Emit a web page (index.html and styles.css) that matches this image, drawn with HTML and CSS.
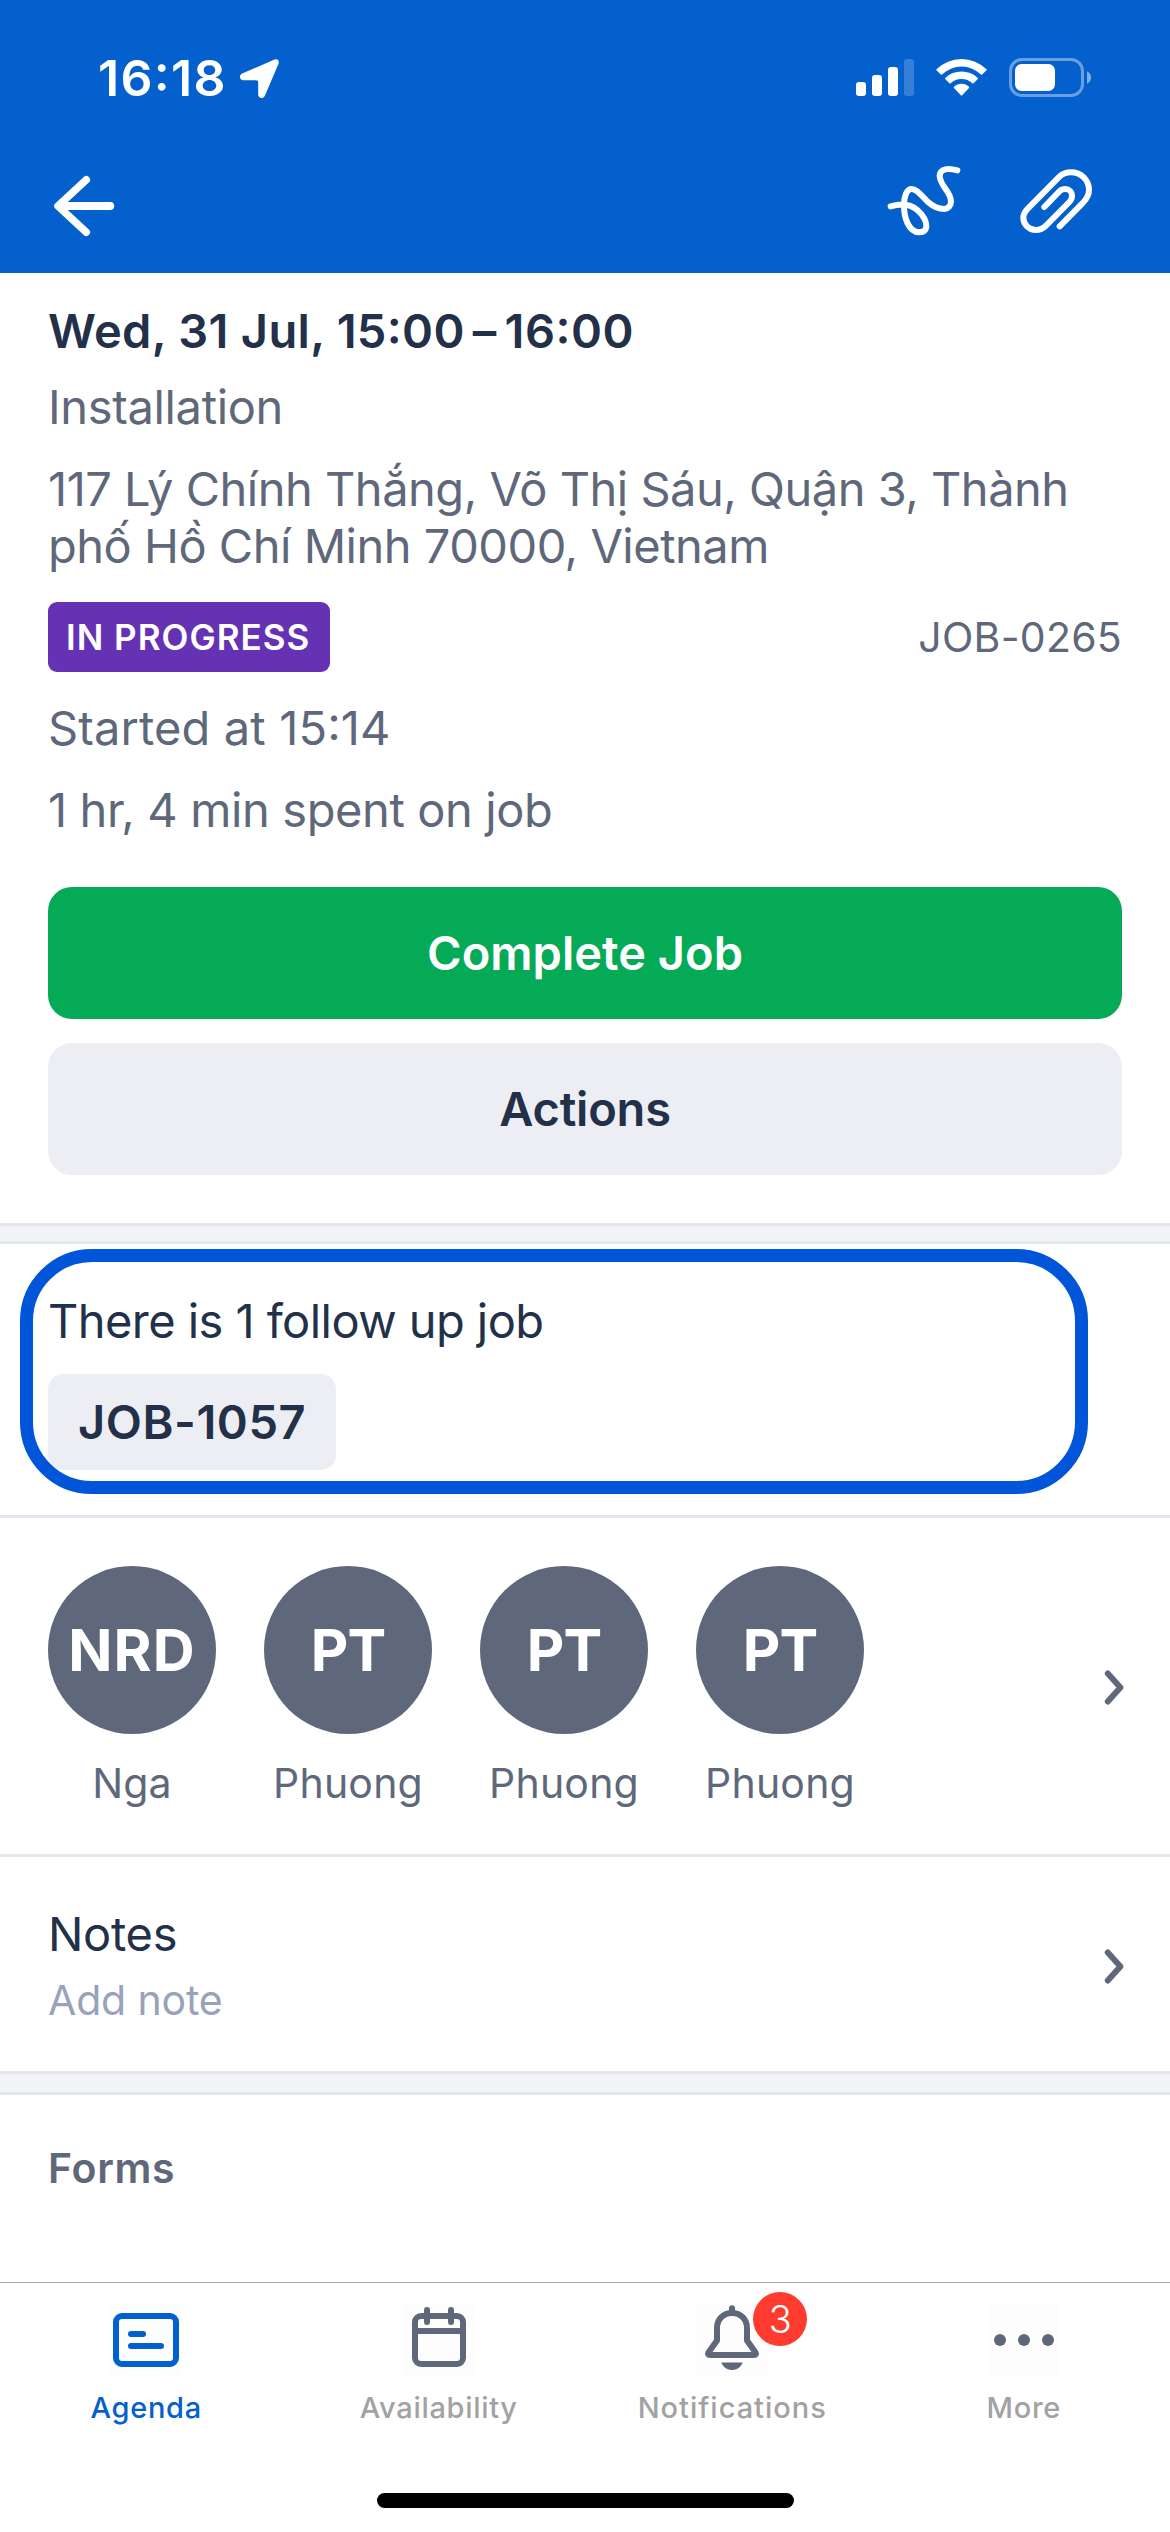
FILE: index.html
```html
<!DOCTYPE html>
<html lang="en">
<head>
<meta charset="utf-8">
<title>Job details</title>
<link rel="stylesheet" href="styles.css">
</head>
<body>
<div class="screen">
  <header class="header">
    <div class="status-bar">
      <span class="clock">16:18</span>
      <svg class="location" viewBox="0 0 39 39" width="39" height="39"><path d="M34.500 .4C37.600-.6 39.400 1.600 38.600 4.600L25 36.400C23.500 40.200 18.200 39.600 18.200 35.500V23.200Q18.200 21.200 16.200 21.200H3.600C-.6 21.200-1.300 16.200 2.200 14.600Z" fill="#fff"/></svg>
      <svg class="device" viewBox="0 0 235 40" width="235" height="40">
        <g fill="#fff">
          <rect x="0" y="24" width="10" height="14" rx="3"/>
          <rect x="16" y="17" width="10" height="21" rx="3"/>
          <rect x="32" y="9" width="10" height="29" rx="3"/>
          <rect x="48" y="1" width="10" height="37" rx="3" opacity=".2"/>
          <path d="M80.500 11.200A35.800 35.800 0 0 1 130.500 11.200Q131 11.700 130.500 12.200L126.200 16.500Q125.600 17 125 16.500A28 28 0 0 0 86 16.500Q85.400 17 84.800 16.500L80.500 12.200Q80 11.700 80.500 11.200Z"/>
          <path d="M89.200 20A23.400 23.400 0 0 1 121.800 20Q122.300 20.600 121.800 21.100L117.600 25.300Q117 25.800 116.400 25.300A15.700 15.700 0 0 0 94.600 25.300Q94 25.800 93.400 25.300L89.200 21.100Q88.700 20.600 89.200 20Z"/>
          <path d="M98 28.800A10.600 10.600 0 0 1 113 28.800Q113.500 29.400 113 30L106.200 37.200Q105.500 37.900 104.800 37.200L98 30Q97.500 29.400 98 28.800Z"/>
        </g>
        <rect x="154.500" y="1.500" width="72" height="36" rx="11.500" fill="none" stroke="#fff" stroke-width="3" opacity=".4"/>
        <rect x="159" y="6" width="40" height="27" rx="6.500" fill="#fff"/>
        <path d="M231 13.300Q235 15.300 235 19.500T231 25.700Z" fill="#fff" opacity=".5"/>
      </svg>
    </div>
    <nav class="nav-bar">
      <svg class="back" viewBox="48 160 72 92" width="72" height="92" fill="none" stroke="#fff" stroke-linecap="round" stroke-linejoin="round"><path d="M86.300 179.700L58 206L86.300 232.300" stroke-width="7.500"/><path d="M60 206H110.300" stroke-width="7.800"/></svg>
      <div class="nav-actions">
        <svg viewBox="258 390 228 276" width="76" height="92" fill="none" stroke="#fff" stroke-width="18" stroke-linecap="round" stroke-linejoin="round"><path d="M272 529C300 521 330 521 352 540C370 556 379 572 379 588C379 601 370 607 357 607C325 605 312 562 312 527C312 500 319 478 334 477C352 476 366 500 384 516C402 532 418 537 433 537C446 536 453 527 453 514C452 483 420 468 419 438C420 415 445 413 472 421"/></svg>
        <svg viewBox="654 390 228 276" width="76" height="92" fill="none" stroke="#fff" stroke-width="18" stroke-linecap="round" stroke-linejoin="round"><path d="M779 589L850 517C862 504 867 495 867 480C867 450 843 427 813 427C797 427 786 432 776 442L684 535C674 545 670 553 670 563C670 583 687 600 708 600C720 600 729 596 738 587L808 516C814 510 816 505 816 497C816 485 807 477 796 477C789 477 783 479 778 484L733 531"/></svg>
      </div>
    </nav>
  </header>

  <main class="content">
    <section class="summary">
      <h1 class="schedule">Wed, 31 Jul, 15:00<span class="dash">–</span><span class="end-time">16:00</span></h1>
      <p class="job-type">Installation</p>
      <p class="address">117 Lý Chính Thắng, Võ Thị Sáu, Quận 3, Thành<br>phố Hồ Chí Minh 70000, Vietnam</p>
      <div class="job-row">
        <span class="badge">IN PROGRESS</span>
        <span class="job-number">JOB-0265</span>
      </div>
      <p class="started">Started at 15:14</p>
      <p class="spent">1 hr, 4 min spent on job</p>
      <div class="buttons">
        <button class="button button-primary">Complete Job</button>
        <button class="button button-secondary">Actions</button>
      </div>
    </section>

    <div class="divider divider-first"></div>

    <section class="follow-up">
      <p class="follow-text">There is 1 follow up job</p>
      <a class="chip">JOB-1057</a>
      <div class="highlight"></div>
    </section>

    <section class="row team">
      <div class="people">
        <div class="person"><div class="avatar">NRD</div><div class="name">Nga</div></div>
        <div class="person"><div class="avatar avatar-two">PT</div><div class="name">Phuong</div></div>
        <div class="person"><div class="avatar avatar-two">PT</div><div class="name">Phuong</div></div>
        <div class="person"><div class="avatar avatar-two">PT</div><div class="name">Phuong</div></div>
      </div>
      <svg class="chevron" viewBox="0 0 20 36" width="20" height="36"><path d="M3.800 4.500L16.400 18.500L3.800 32.500" /></svg>
    </section>

    <section class="row notes">
      <div>
        <p class="notes-title">Notes</p>
        <p class="notes-add">Add note</p>
      </div>
      <svg class="chevron" viewBox="0 0 20 36" width="20" height="36"><path d="M3.800 4.500L16.400 18.500L3.800 32.500" /></svg>
    </section>

    <div class="divider"></div>

    <section class="forms"><h2 class="forms-title">Forms</h2></section>
  </main>

  <footer class="tab-bar">
    <div class="tabs">
      <a class="tab tab-active">
        <span class="tab-icon"><svg viewBox="0 0 24 24" width="72" height="72" fill="none" stroke="#0460cc" stroke-width="2" stroke-linecap="round"><rect x="2" y="4" width="20" height="16" rx="2"/><path d="M7 10h4M7 14h10"/></svg></span>
        <span class="tab-label">Agenda</span>
      </a>
      <a class="tab">
        <span class="tab-icon"><svg viewBox="0 0 24 24" width="72" height="72" fill="none" stroke="#5f687b" stroke-width="2" stroke-linecap="round"><rect x="4" y="4" width="16" height="16" rx="2"/><path d="M4 9h16" stroke-linecap="butt"/><path d="M8 2v4M16 2v4"/></svg></span>
        <span class="tab-label">Availability</span>
      </a>
      <a class="tab tab-notifications">
        <span class="tab-icon"><svg viewBox="0 0 24 24" width="72" height="72" fill="none" stroke="#5f687b" stroke-width="2" stroke-linecap="round" stroke-linejoin="round"><path d="M12 1.400V3" /><path d="M12 3C9 3 7 5.200 7 8V12.200L4.200 16.100C3.800 16.700 4.100 17 4.700 17H19.300C19.900 17 20.200 16.700 19.800 16.100L17 12.200V8C17 5.200 15 3 12 3Z"/><path d="M8.400 19.500H15.600C15 21 13.700 22 12 22S9 21 8.400 19.500Z" fill="#5f687b" stroke="none"/></svg><span class="count">3</span></span>
        <span class="tab-label tab-label-wide">Notifications</span>
      </a>
      <a class="tab">
        <span class="tab-icon"><svg viewBox="0 0 24 24" width="72" height="72" fill="#5f687b"><circle cx="4" cy="12" r="2"/><circle cx="12" cy="12" r="2"/><circle cx="20" cy="12" r="2"/></svg></span>
        <span class="tab-label">More</span>
      </a>
    </div>
    <div class="home-indicator"></div>
  </footer>
</div>
</body>
</html>
```
FILE: styles.css
```css
* {
  box-sizing: border-box;
}

body,
h1,
h2,
p {
  margin: 0;
}

body {
  background: #fff;
  color: #5f687b;
  font: 400 47px/56px Inter, "Liberation Sans", sans-serif;
}

svg {
  display: block;
  flex: none;
}

.screen {
  display: flex;
  flex-direction: column;
  width: 1170px;
  height: 2532px;
  overflow: hidden;
}

/* Header */
.header {
  height: 273px;
  padding-top: 48px;
  background: #0460cc;
  color: #fff;
}

.status-bar {
  display: flex;
  align-items: center;
  height: 60px;
  padding: 0 79px 0 98px;
}

.clock {
  width: 130px;
  font-size: 50px;
  font-weight: 600;
  font-feature-settings: "case";
  line-height: 60px;
  letter-spacing: 1.3px;
}

.location {
  margin-left: 12px;
}

.device {
  margin-left: auto;
}

.nav-bar {
  display: flex;
  justify-content: space-between;
  padding: 52px 76px 0 48px;
}

.nav-actions {
  display: flex;
  gap: 56px;
}

/* Job summary */
.content {
  flex: 1;
}

.summary {
  padding: 29px 48px 48px;
}

.schedule {
  color: #22304a;
  font-size: 47px;
  font-weight: 600;
  font-feature-settings: "case";
  line-height: 57px;
  letter-spacing: 0.33px;
}

.dash {
  margin: 0 8px;
  font-feature-settings: normal;
}

.end-time {
  letter-spacing: 0.52px;
}

.job-type {
  margin-top: 19px;
  line-height: 57px;
  letter-spacing: -0.34px;
}

.address {
  margin-top: 25px;
  line-height: 57px;
  letter-spacing: -0.49px;
  white-space: nowrap;
}

.job-row {
  display: flex;
  align-items: center;
  justify-content: space-between;
  height: 70px;
  margin-top: 28px;
}

.badge {
  width: 282px;
  height: 70px;
  padding-left: 18px;
  border-radius: 9px;
  background: #6532b4;
  color: #fff;
  font-size: 35px;
  font-weight: 600;
  line-height: 70px;
  letter-spacing: 1.01px;
}

.job-number {
  font-size: 41px;
  letter-spacing: 0.25px;
}

.started {
  margin-top: 27px;
  font-feature-settings: "case";
  line-height: 57px;
  letter-spacing: 0.12px;
}

.spent {
  margin-top: 25px;
  line-height: 57px;
  letter-spacing: -0.38px;
}

.buttons {
  display: flex;
  flex-direction: column;
  gap: 24px;
  margin-top: 49px;
}

.button {
  height: 132px;
  padding: 0;
  border: 0;
  border-radius: 24px;
  font: 600 47px/132px Inter, "Liberation Sans", sans-serif;
}

.button-primary {
  background: #05aa56;
  color: #fff;
}

.button-secondary {
  background: #edeef3;
  color: #22304a;
  letter-spacing: -0.19px;
}

.divider {
  height: 24px;
  border: solid #e3e6ee;
  border-width: 3px 0;
  background: #f3f4f8;
}

.divider-first {
  height: 21px;
}

/* Follow-up job */
.follow-up {
  position: relative;
  height: 274px;
  padding: 49px 48px 45px;
  border-bottom: 3px solid #e3e6ee;
  color: #22304a;
}

.follow-text {
  letter-spacing: -0.56px;
}

.chip {
  display: block;
  width: 288px;
  margin-top: 25px;
  padding-left: 30px;
  border-radius: 15px;
  background: #edeef3;
  font-weight: 600;
  line-height: 96px;
  letter-spacing: 0.55px;
}

.highlight {
  position: absolute;
  top: 5px;
  left: 20px;
  width: 1068px;
  height: 245px;
  border: 13px solid #0055d8;
  border-radius: 72px;
}

/* List rows */
.row {
  display: flex;
  align-items: center;
  justify-content: space-between;
  padding: 48px 46px 46px 48px;
}

.team {
  border-bottom: 3px solid #e3e6ee;
}

.people {
  display: flex;
  gap: 48px;
}

.avatar {
  width: 168px;
  height: 168px;
  border-radius: 50%;
  background: #5f687b;
  color: #fff;
  font-size: 58px;
  font-weight: 700;
  line-height: 168px;
  letter-spacing: 1.15px;
  text-align: center;
}

.avatar-two {
  letter-spacing: -0.98px;
}

.name {
  margin-top: 24px;
  font-size: 41px;
  line-height: 50px;
  letter-spacing: 0.2px;
  text-align: center;
}

.chevron path {
  fill: none;
  stroke: #5f687b;
  stroke-width: 6px;
  stroke-linecap: round;
  stroke-linejoin: round;
}

.notes {
  padding-top: 49px;
}

.notes-title {
  color: #22304a;
  letter-spacing: -0.3px;
}

.notes-add {
  margin-top: 13px;
  color: #98a3bb;
  font-size: 41px;
  line-height: 50px;
  letter-spacing: -0.14px;
}

.forms {
  padding: 48px;
}

.forms-title {
  font-size: 41px;
  font-weight: 600;
  line-height: 50px;
  letter-spacing: 0.69px;
}

/* Tab bar */
.tab-bar {
  height: 250px;
  border-top: 1px solid #a9a9ac;
}

.tabs {
  display: grid;
  grid-template-columns: repeat(4, 1fr);
  padding-top: 21px;
}

.tab {
  display: flex;
  flex-direction: column;
  align-items: center;
  color: #a2a2a2;
}

.tab-active {
  color: #0460cc;
}

.tab-notifications {
  padding-left: 2px;
}

.tab-icon {
  position: relative;
  background: #fdfdfe;
}

.tab-label {
  margin-top: 14px;
  font-size: 29px;
  font-weight: 500;
  line-height: 36px;
  letter-spacing: 0.69px;
}

.tab-label-wide {
  letter-spacing: 0.99px;
}

.count {
  position: absolute;
  top: -12px;
  left: 57px;
  width: 54px;
  height: 54px;
  border-radius: 50%;
  background: #ff3b30;
  color: #fff;
  font-size: 38px;
  font-weight: 350;
  line-height: 54px;
  text-align: center;
}

.home-indicator {
  width: 417px;
  height: 15px;
  margin: 67px auto 0;
  border-radius: 8px;
  background: #000;
}
```
